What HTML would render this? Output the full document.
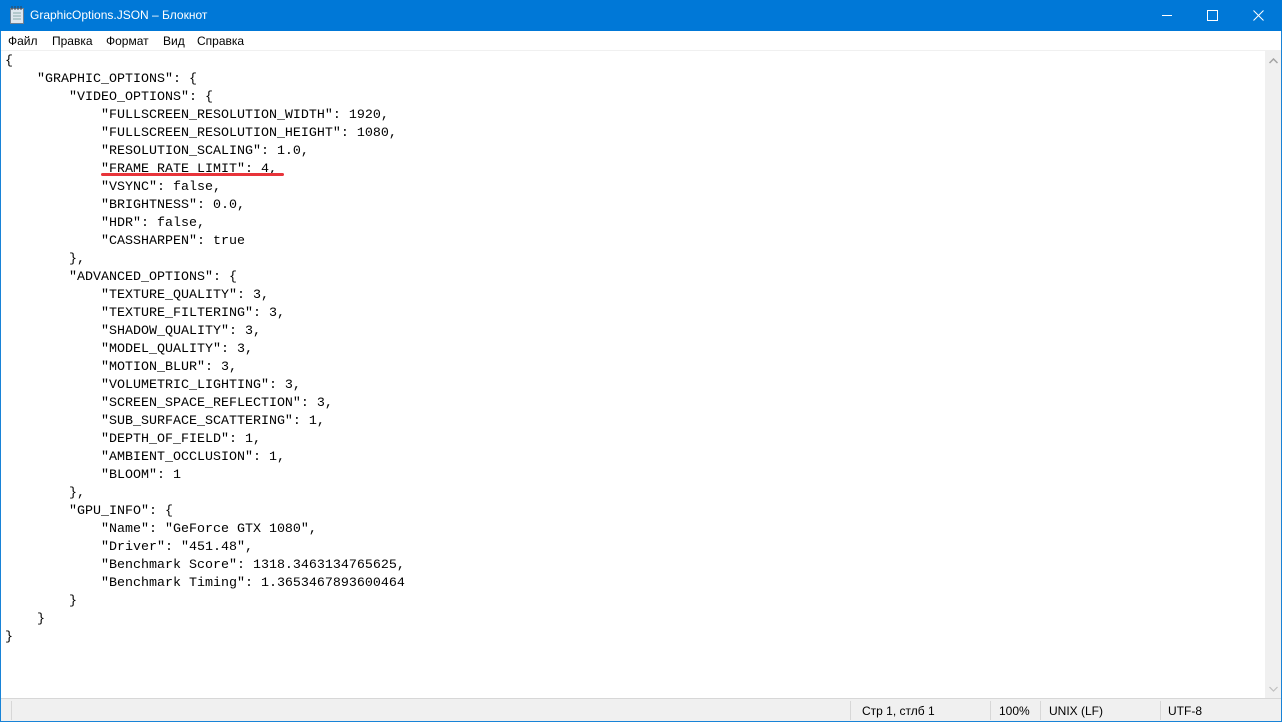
<!DOCTYPE html>
<html><head><meta charset="utf-8"><style>
*{margin:0;padding:0;box-sizing:border-box}
body{width:1282px;height:722px;overflow:hidden;background:#fff;position:relative;font-family:"Liberation Sans",sans-serif}
.win{position:absolute;left:0;top:0;width:1282px;height:722px;border:1px solid #1883d7}
.title{position:absolute;left:0;top:0;width:1282px;height:31px;background:#0078d7;color:#fff;font-size:12px}
.title .t{position:absolute;left:30px;top:8px}
.menu{position:absolute;left:1px;top:31px;width:1280px;height:19px;background:#fff;font-size:12px;color:#000}
.menu span{position:absolute;top:3px}
.sep{position:absolute;left:1px;top:50px;width:1280px;height:1px;background:#f0f0f0}
pre{position:absolute;left:5px;top:53px;font-family:"Liberation Mono","DejaVu Sans Mono",monospace;font-size:13.33px;line-height:18px;color:#000}
.sb{position:absolute;left:1265px;top:51px;width:16px;height:647px;background:#f0f0f0}
.status{position:absolute;left:1px;top:698px;width:1280px;height:23px;background:#f0f0f0;border-top:1px solid #d7d7d7;font-size:12px;color:#000}
.status span{position:absolute;top:5px}
.status i{position:absolute;top:2px;width:1px;height:19px;background:#d7d7d7}
.red{position:absolute;left:101px;top:173px;width:183px;height:3px;background:#e8343a;border-radius:2px}
</style></head><body>
<div class="win"></div>
<div class="title">
<svg style="position:absolute;left:9px;top:6px" width="16" height="18" viewBox="0 0 16 18"><rect x="1.5" y="2.5" width="13" height="15" fill="#dfe6ee" stroke="#6f7f90"/><path d="M4 7h8M4 10h8M4 13h8" stroke="#8aa" /><path d="M3 0v4M6 0v4M9 0v4M12 0v4" stroke="#345"/></svg>
<span class="t">GraphicOptions.JSON – Блокнот</span>
<svg style="position:absolute;left:1161px;top:10px" width="12" height="12"><path d="M1 5.5h10" stroke="#fff"/></svg>
<svg style="position:absolute;left:1207px;top:10px" width="12" height="12"><rect x="0.5" y="0.5" width="10" height="10" fill="none" stroke="#fff"/></svg>
<svg style="position:absolute;left:1253px;top:10px" width="12" height="12"><path d="M0.5 0.5l10 10M10.5 0.5l-10 10" stroke="#fff"/></svg>
</div>
<div class="menu"><span style="left:7px">Файл</span><span style="left:51px">Правка</span><span style="left:105px">Формат</span><span style="left:162px">Вид</span><span style="left:196px">Справка</span></div>
<div class="sep"></div>
<pre>{
    "GRAPHIC_OPTIONS": {
        "VIDEO_OPTIONS": {
            "FULLSCREEN_RESOLUTION_WIDTH": 1920,
            "FULLSCREEN_RESOLUTION_HEIGHT": 1080,
            "RESOLUTION_SCALING": 1.0,
            "FRAME_RATE_LIMIT": 4,
            "VSYNC": false,
            "BRIGHTNESS": 0.0,
            "HDR": false,
            "CASSHARPEN": true
        },
        "ADVANCED_OPTIONS": {
            "TEXTURE_QUALITY": 3,
            "TEXTURE_FILTERING": 3,
            "SHADOW_QUALITY": 3,
            "MODEL_QUALITY": 3,
            "MOTION_BLUR": 3,
            "VOLUMETRIC_LIGHTING": 3,
            "SCREEN_SPACE_REFLECTION": 3,
            "SUB_SURFACE_SCATTERING": 1,
            "DEPTH_OF_FIELD": 1,
            "AMBIENT_OCCLUSION": 1,
            "BLOOM": 1
        },
        "GPU_INFO": {
            "Name": "GeForce GTX 1080",
            "Driver": "451.48",
            "Benchmark Score": 1318.3463134765625,
            "Benchmark Timing": 1.3653467893600464
        }
    }
}</pre>
<div class="red"></div>
<div class="sb">
<svg style="position:absolute;left:4px;top:7px" width="9" height="6"><path d="M0.5 5l4-4 4 4" stroke="#a3a3a3" stroke-width="1.5" fill="none"/></svg>
<svg style="position:absolute;left:4px;top:635px" width="9" height="6"><path d="M0.5 1l4 4 4-4" stroke="#c0c0c0" stroke-width="1.2" fill="none"/></svg>
</div>
<div class="status">
<i style="left:10px"></i><i style="left:849px"></i><i style="left:989px"></i><i style="left:1039px"></i><i style="left:1159px"></i>
<span style="left:861px">Стр 1, стлб 1</span><span style="left:998px">100%</span><span style="left:1048px">UNIX (LF)</span><span style="left:1167px">UTF-8</span>
</div>
</body></html>
